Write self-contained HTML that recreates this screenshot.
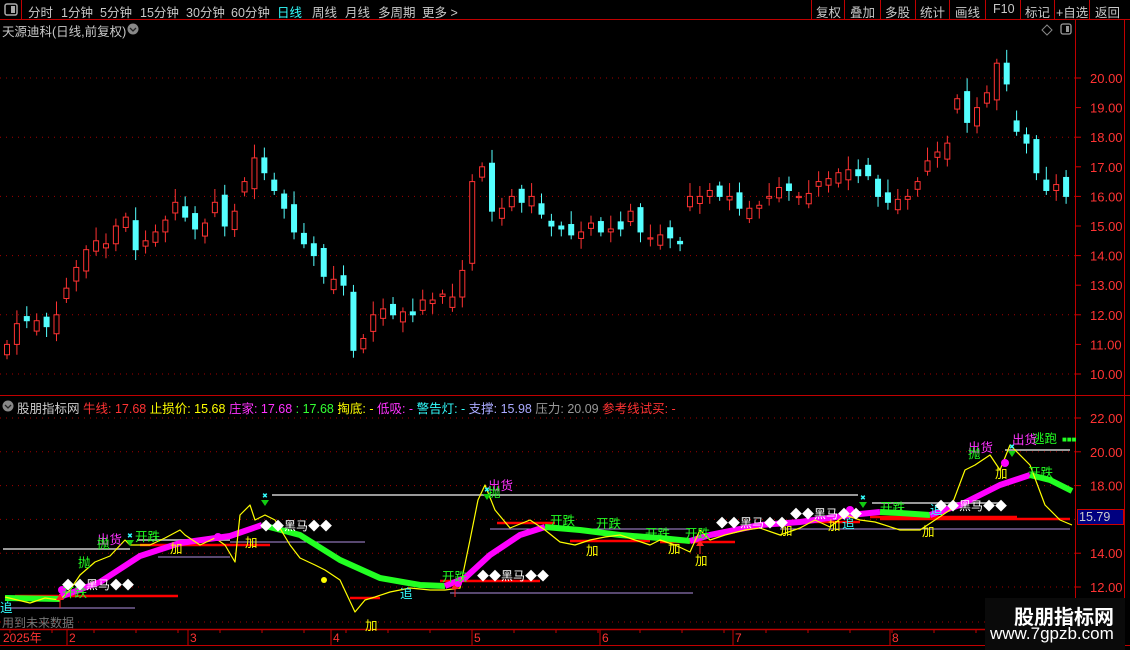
<!DOCTYPE html>
<html><head><meta charset="utf-8">
<style>
*{margin:0;padding:0;box-sizing:border-box}
body{width:1130px;height:650px;background:#000;overflow:hidden;position:relative;font-family:"Liberation Sans","Noto Sans CJK SC",sans-serif;font-size:13px;color:#c8c8c8}
.a{position:absolute;white-space:nowrap}
.t{position:absolute;top:2px;font-size:12.5px;white-space:nowrap}
svg{position:absolute;left:0;top:0}
</style></head><body>
<svg width="1130" height="650" id="s" font-family="Liberation Sans, Noto Sans CJK SC, sans-serif">
<line x1="0" y1="19.5" x2="1130" y2="19.5" stroke="#c00000"/>
<line x1="1075.5" y1="20" x2="1075.5" y2="645" stroke="#c00000"/>
<line x1="0" y1="395.5" x2="1130" y2="395.5" stroke="#c00000"/>
<line x1="0" y1="629.5" x2="1075" y2="629.5" stroke="#c00000" stroke-width="1.5"/>
<line x1="0" y1="645.5" x2="1130" y2="645.5" stroke="#c00000"/>
<line x1="21.5" y1="0" x2="21.5" y2="19" stroke="#c00000"/>
<line x1="1124.5" y1="20" x2="1124.5" y2="645" stroke="#c00000"/>
<g stroke="#c00000"><line x1="811.5" y1="0" x2="811.5" y2="19"/><line x1="844.5" y1="0" x2="844.5" y2="19"/><line x1="880.5" y1="0" x2="880.5" y2="19"/><line x1="915.5" y1="0" x2="915.5" y2="19"/><line x1="949.5" y1="0" x2="949.5" y2="19"/><line x1="985.5" y1="0" x2="985.5" y2="19"/><line x1="1020.5" y1="0" x2="1020.5" y2="19"/><line x1="1054.5" y1="0" x2="1054.5" y2="19"/><line x1="1089.5" y1="0" x2="1089.5" y2="19"/></g>
<rect x="5" y="4" width="12" height="11" rx="2" fill="none" stroke="#aaa" stroke-width="1.5"/><rect x="11" y="6" width="4" height="7" fill="#aaa"/>
<rect x="1061" y="24" width="10" height="10" rx="2" fill="none" stroke="#999" stroke-width="1.3"/><rect x="1066" y="26" width="3" height="6" fill="#999"/>
<path d="M1047 25 L1052 30 L1047 35 L1042 30Z" fill="none" stroke="#888"/>
<circle cx="133" cy="29" r="5.5" fill="#888"/><path d="M130 28 L133 31 L136 28" stroke="#222" fill="none" stroke-width="1.3"/>
<circle cx="8" cy="406" r="5.5" fill="#888"/><path d="M5 405 L8 408 L11 405" stroke="#222" fill="none" stroke-width="1.3"/>
<g id="grid" stroke="#a00000" stroke-dasharray="1 5"></g>
<g id="candles"></g>
<g id="lower"></g>
</svg>

<div class="t" style="left:28px">分时</div>
<div class="t" style="left:61px">1分钟</div>
<div class="t" style="left:100px">5分钟</div>
<div class="t" style="left:140px">15分钟</div>
<div class="t" style="left:186px">30分钟</div>
<div class="t" style="left:231px">60分钟</div>
<div class="t" style="left:277px;color:#3ff">日线</div>
<div class="t" style="left:312px">周线</div>
<div class="t" style="left:345px">月线</div>
<div class="t" style="left:378px">多周期</div>
<div class="t" style="left:422px">更多 &gt;</div>
<div class="t" style="left:816px">复权</div>
<div class="t" style="left:850px">叠加</div>
<div class="t" style="left:885px">多股</div>
<div class="t" style="left:920px">统计</div>
<div class="t" style="left:955px">画线</div>
<div class="t" style="left:993px">F10</div>
<div class="t" style="left:1025px">标记</div>
<div class="t" style="left:1056px">+自选</div>
<div class="t" style="left:1095px">返回</div>
<div class="a" style="left:2px;top:21px;font-size:12.5px">天源迪科(日线,前复权)</div>
<div class="a" style="left:17px;top:398px;font-size:12.5px"><span style="color:#ccc">股朋指标网</span> <span style="color:#f33">牛线: 17.68</span> <span style="color:#ff0">止损价: 15.68</span> <span style="color:#f3f">庄家: 17.68</span> <span style="color:#3f3">: 17.68</span> <span style="color:#ff0">掏底: -</span> <span style="color:#f3f">低吸: -</span> <span style="color:#3ff">警告灯: -</span> <span style="color:#aaf">支撑: 15.98</span> <span style="color:#999">压力: 20.09</span> <span style="color:#f33">参考线试买: -</span></div>
<div class="a" style="left:2px;top:614px;font-size:12px;color:#777">用到未来数据</div>
<div class="a" style="left:1077px;top:509px;width:47px;height:16px;background:#000080;border:1px solid #c00;color:#ccc;font-size:12.5px;padding-left:1px">15.79</div>
<div class="a" style="left:985px;top:598px;width:140px;height:52px;background:#0a0a0a"></div>
<div class="a" style="left:1014px;top:601px;font-size:20px;color:#fff;font-weight:bold">股朋指标网</div>
<div class="a" style="left:990px;top:624px;font-size:17px;color:#fff">www.7gpzb.com</div>

<script>
var S="http://www.w3.org/2000/svg",sv=document.getElementById('s');
function el(t,a,p){var e=document.createElementNS(S,t);for(var k in a)e.setAttribute(k,a[k]);(p||sv).appendChild(e);return e}
function tx(x,y,s,c,f,p){var e=el('text',{x:x,y:y,fill:c,'font-size':f||12},p);e.textContent=s;return e}
var g=document.getElementById('grid');
function Y(p){return 78+(20-p)*29.6}
function L(p){return 418+(22-p)*16.9}
[20,18,16,14,12,10].forEach(function(p){el('line',{x1:0,y1:Y(p),x2:1075,y2:Y(p)},g)});
[22,20,18,16,14,12].forEach(function(p){el('line',{x1:0,y1:L(p),x2:1075,y2:L(p)},g)});
el('line',{x1:0,y1:622,x2:1075,y2:622},g);
for(var p=10;p<=20;p++){el('line',{x1:1075,y1:Y(p),x2:1081,y2:Y(p),stroke:'#c00'});tx(1090,Y(p)+5,p.toFixed(2),'#f33',13)}
[22,20,18,14,12].forEach(function(p){el('line',{x1:1075,y1:L(p),x2:1081,y2:L(p),stroke:'#c00'});tx(1090,L(p)+5,p.toFixed(2),'#f33',13)});
var c=[11.0,11.7,11.8,11.8,11.6,12.0,12.9,13.6,14.2,14.5,14.4,15.0,15.3,14.2,14.5,14.8,15.2,15.8,15.3,14.9,15.1,15.8,15.0,15.5,16.5,17.3,16.8,16.2,15.6,14.8,14.4,14.0,13.3,13.2,13.0,10.8,11.2,12.0,12.2,12.0,12.1,12.0,12.5,12.5,12.7,12.6,13.5,16.5,17.0,15.5,15.6,16.0,15.8,16.0,15.4,15.0,14.9,14.7,14.8,15.1,14.8,14.9,14.9,15.5,14.8,14.6,14.7,14.6,14.4,16.0,16.0,16.2,16.0,16.0,15.6,15.6,15.7,16.0,16.3,16.2,16.0,16.1,16.5,16.6,16.8,16.9,16.7,16.7,16.0,15.8,15.9,16.0,16.5,17.2,17.5,17.8,19.3,18.5,19.0,19.5,20.5,19.8,18.2,17.8,16.8,16.2,16.4,16.0];
var cg=document.getElementById('candles'),n=c.length,dx=1069/n;
for(var i=0;i<n;i++){var x=4+i*dx,o=i?c[i-1]+(((i*7)%5)-2)*0.12:10.6,cl=c[i];
 if(i%3==0){o=cl+(cl>o?-0.35:0.35)}
 var up=cl>=o,hi=Math.max(o,cl)+0.15+((i*3)%4)*0.1,lo=Math.min(o,cl)-0.15-((i*5)%3)*0.1;
 var col=up?'#ff3232':'#54ffff';
 el('line',{x1:x+3,y1:Y(hi),x2:x+3,y2:Y(lo),stroke:col},cg);
 var h=Math.max(1,Math.abs(Y(o)-Y(cl)));
 el('rect',{x:x+0.5,y:Math.min(Y(o),Y(cl)),width:5,height:h,fill:up?'#000':col,stroke:col,'stroke-width':1},cg)}
var lg=document.getElementById('lower');
function pl(pts,col,w,d){el('polyline',{points:pts,fill:'none',stroke:col,'stroke-width':w,'stroke-dasharray':d||'' ,'stroke-linejoin':'round'},lg)}
[[3,549,130],[137,540,230],[272,495,858],[872,503,1000],[1005,450,1070]].forEach(function(a){pl(a[0]+','+a[1]+' '+a[2]+','+a[1],'#999',2)});
[[5,608,135],[158,557,230],[230,542,365],[450,593,693],[490,529,690],[780,529,1070]].forEach(function(a){pl(a[0]+','+a[1]+' '+a[2]+','+a[1],'#b090e0',1)});
[[15,596,178],[140,545,270],[350,598,380],[440,581,540],[497,523,555],[570,541,650],[660,542,735],[785,522,860],[870,517,1017],[880,519,1070]].forEach(function(a){pl(a[0]+','+a[1]+' '+a[2]+','+a[1],'#f00',2.5)});
pl('5,598 60,599','#2f2',6);
pl('60,597 100,582 140,556 180,543 230,536 262,525','#f0f',6);
pl('262,525 300,535 340,560 380,578 420,585 445,586','#2f2',6);
pl('445,586 465,578 490,555 520,535 545,527','#f0f',6);
pl('545,527 580,530 620,535 660,538 690,541','#2f2',6);
pl('690,541 710,535 760,525 800,522 850,515 880,512','#f0f',6);
pl('880,512 900,513 930,515','#2f2',6);
pl('930,515 960,505 1000,485 1030,475','#f0f',6);
pl('1030,475 1050,480 1072,491','#2f2',6);
pl('5,597 30,603 45,598 60,600 70,590 80,575 95,562 110,556 125,540 130,545 150,545 165,538 180,530 185,535 200,545 215,538 225,545 235,562 240,515 250,505 255,520 265,515 275,520 290,545 300,558 315,565 325,570 340,580 355,612 365,600 375,597 390,592 410,588 430,590 445,590 460,588 470,540 478,500 485,485 495,510 510,528 530,520 545,530 560,542 575,545 590,540 605,537 620,535 635,540 650,545 660,540 675,545 690,552 700,530 710,540 725,535 745,530 760,528 780,535 800,528 815,520 830,527 845,515 860,520 875,522 900,530 920,530 935,520 950,510 965,470 975,465 990,455 1000,470 1010,445 1030,465 1045,505 1060,520 1072,525','#ff0',1.2);
el('circle',{cx:324,cy:580,r:3,fill:'#ff0'},lg);
[[62,597,'开跌','#2f2'],[135,541,'开跌','#2f2'],[442,581,'开跌','#2f2'],[550,525,'开跌','#2f2'],[596,528,'开跌','#2f2'],[645,538,'开跌','#2f2'],[685,538,'开跌','#2f2'],[880,512,'开跌','#2f2'],[1028,477,'开跌','#2f2'],[1032,443,'逃跑','#2f2'],
[97,544,'出货','#f3f'],[488,490,'出货','#f3f'],[968,452,'出货','#f3f'],[1012,444,'出货','#f3f'],[78,567,'抛','#2f2'],[97,548,'抛','#2f2'],[488,497,'抛','#2f2'],[968,458,'抛','#2f2'],
[170,553,'加','#ff0'],[245,547,'加','#ff0'],[365,630,'加','#ff0'],[586,555,'加','#ff0'],[668,553,'加','#ff0'],[828,530,'加','#ff0'],[922,536,'加','#ff0'],[995,478,'加','#ff0'],[780,535,'加','#ff0'],[695,565,'加','#ff0'],
[0,612,'追','#3ff'],[400,598,'追','#3ff'],[842,528,'追','#3ff'],[930,514,'追','#3ff']].forEach(function(a){tx(a[0],a[1],a[2],a[3],12.5)});
[[62,589],[260,530],[477,580],[716,527],[790,518],[935,510]].forEach(function(a){tx(a[0],a[1],'◆◆黑马◆◆','#fff',12)});
tx(1062,442,'■■■','#2f2',8);
[[130,540],[265,500],[487,494],[863,502],[1012,451]].forEach(function(a){el('path',{d:'M'+(a[0]-4)+' '+a[1]+' h8 l-4 6z',fill:'#1c1'},lg);tx(a[0]-3,a[1]-2,'✖','#3ff',7)});
[[60,600],[455,589],[700,546]].forEach(function(a){el('path',{d:'M'+(a[0]-4)+' '+a[1]+' h8 l-4 -6z',fill:'#f22'},lg);el('line',{x1:a[0],y1:a[1],x2:a[0],y2:a[1]+8,stroke:'#f22'},lg)});
[[62,590],[218,537],[458,583],[850,510],[1005,463]].forEach(function(a){el('circle',{cx:a[0],cy:a[1],r:4,fill:'#f0f'},lg)});
[[3,'2025年'],[69,'2'],[190,'3'],[333,'4'],[474,'5'],[602,'6'],[735,'7'],[892,'8']].forEach(function(a){if(a[0]>10)el('line',{x1:a[0]-2,y1:630,x2:a[0]-2,y2:645,stroke:'#c00'});tx(a[0],642,a[1],'#f33',12)});
for(var x=10;x<1075;x+=42)el('line',{x1:x,y1:630,x2:x,y2:633,stroke:'#c00'});
</script>
</body></html>
